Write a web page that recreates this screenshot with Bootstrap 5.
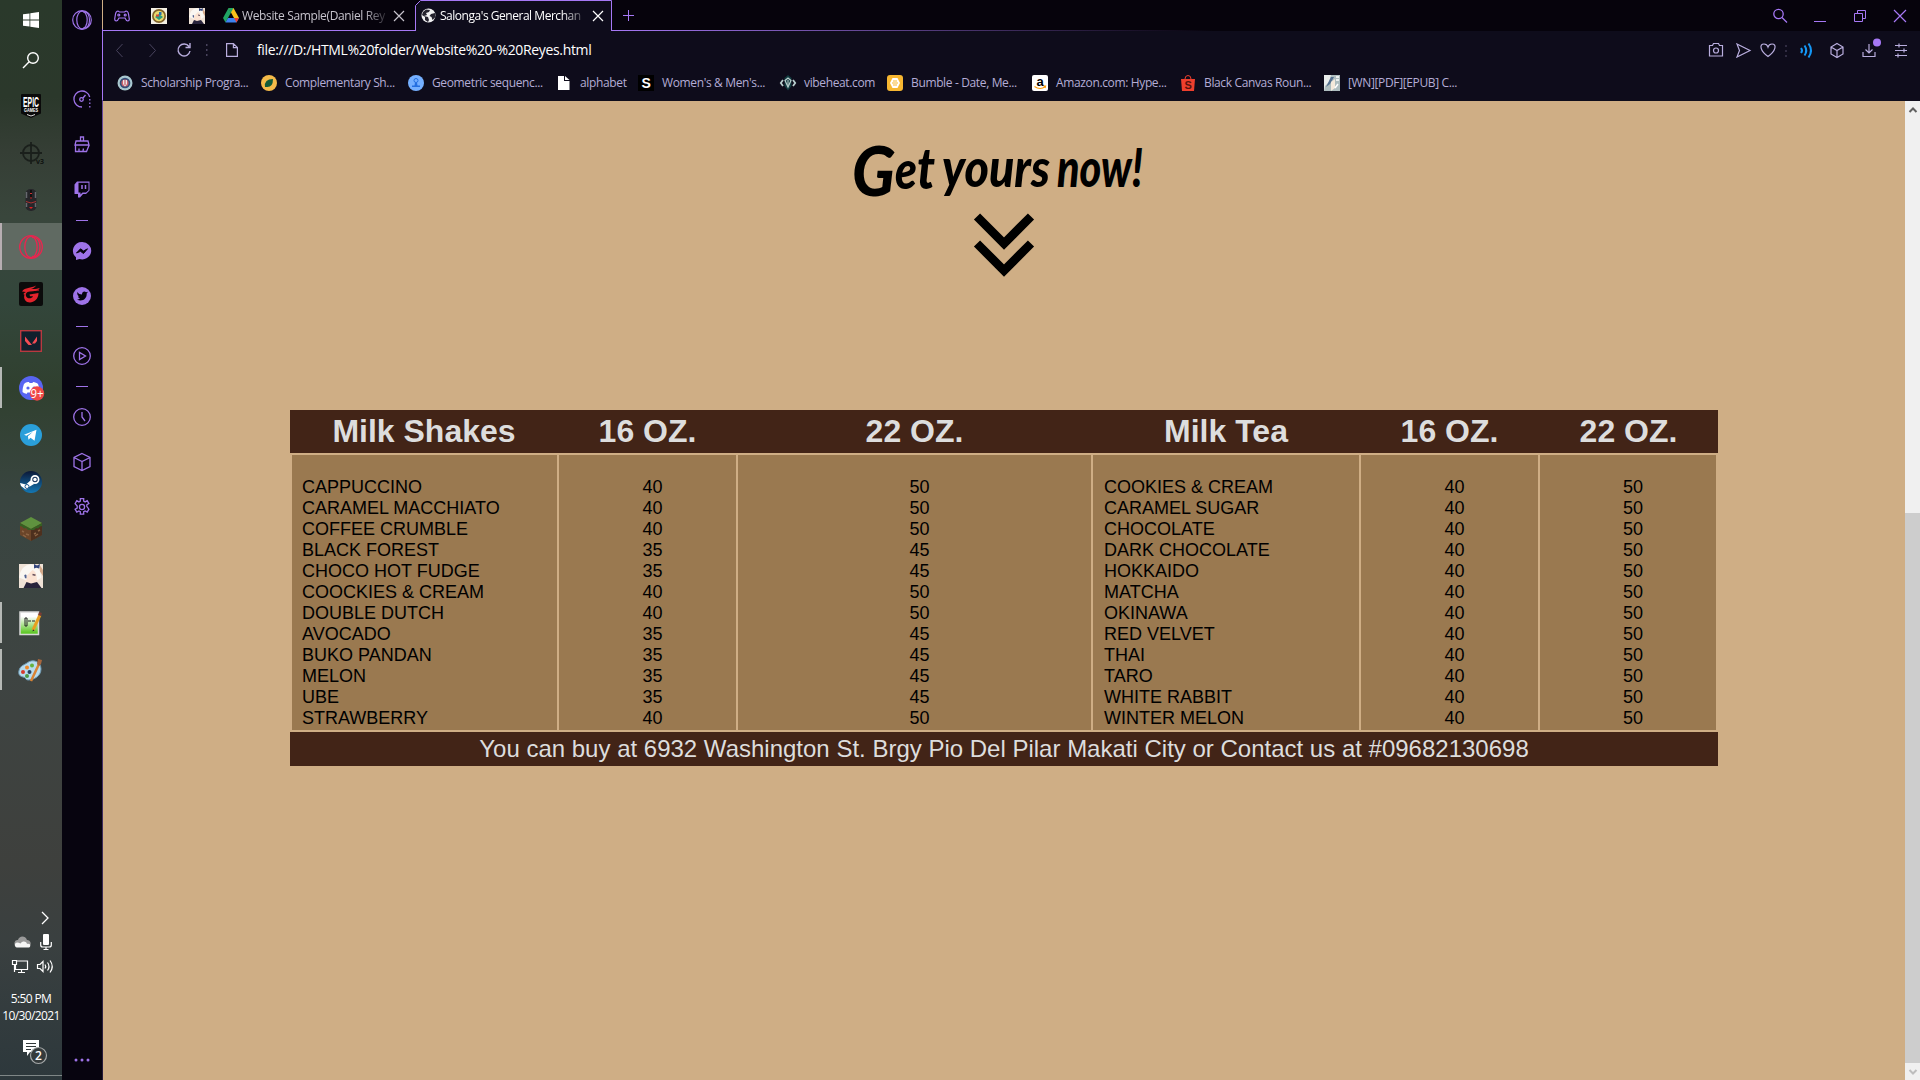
<!DOCTYPE html>
<html lang="en">
<head>
<meta charset="utf-8">
<title>Salonga's General Merchandise</title>
<link href="https://cdn.jsdelivr.net/npm/bootstrap@5.3.0/dist/css/bootstrap.min.css" rel="stylesheet">
<style>
body{width:1920px;height:1080px;background:#cfae85;font-family:"Open Sans","Noto Sans",sans-serif;font-size:12px;line-height:16px}
svg{display:block;flex:none;overflow:visible}
.ln{fill:none;stroke:currentColor}
/* desktop taskbar */
.taskbar{width:62px;background:linear-gradient(#2a392b 0,#2b382b 9%,#353e35 14%,#39463c 20%,#33463b 28%,#30402f 36%,#394540 46%,#3e4442 62%,#3e403d 80%,#3a4040 87%,#2d383c 100%);color:#fff}
.tb-sys{height:40px}
.tb-gap{height:2px}
.tb-app{height:47px;border-left:2px solid transparent;padding-right:2px}
.tb-app.open{border-image:linear-gradient(transparent 4px,#b5b8b5 4px,#b5b8b5 43px,transparent 43px) 1}
.tb-app.current{background:#606a62;border-color:#b7aeb2}
.tray-row{height:24px;gap:9px;padding-left:3px}
.tray-top{padding-left:28px}
.tray-clock{font-size:12px;line-height:17px;letter-spacing:-.62px;height:34px;margin-top:12px}
.notify{height:44px;margin-top:7px}
.tb-edge{height:5px;border-top:1px solid #7f8787}
/* browser sidebar */
.sidebar{width:40px;background:#07040f;color:#9e73e8}
.sidebar>div{display:flex;align-items:center;justify-content:center;flex:none}
.s-logo{height:40px}.s-first{height:78px;padding-top:40px}.s45{height:45px}.s46{height:46px}.s44{height:44px}
.s-twitch{height:49px}
.s-dash{height:16px}
.s-dash:before{content:"";width:12px;height:1px;background:#9e73e8}
/* window chrome */
.browser{width:1818px;border-left:1px solid #4a3470;border-image:linear-gradient(transparent 30px,#a678f5 30px,#a678f5 101px,#694a9d 101px,#5b4189 50%,#251937 100%) 1}
.tabstrip{height:31px;padding-left:1px;background:linear-gradient(90deg,#a678f5 0,#a678f5 510px,transparent 1110px) bottom/100% 1px no-repeat,#06030c;color:#a678f5}
.t-ico{width:36px}.t-ico2{width:38px}.t-plus{width:32px}
.tab-idle{width:199px;padding-left:7px;gap:3px;color:#c6c3cc}
.tab-on{width:197px;padding-left:6px;gap:4px;color:#fff;position:relative}
.tab-on .tab-shape{position:absolute;left:0;top:0}
.tab-on>*{position:relative}
.tab-title{width:145px;white-space:nowrap;letter-spacing:-.36px;-webkit-mask-image:linear-gradient(90deg,#000 84%,rgba(0,0,0,.15))}
.tab-on .tab-title{letter-spacing:-.47px}
.win-ctl{width:160px}
.win-ctl span{display:flex;justify-content:center;align-items:center;width:40px}
.addr{height:38px;background:#0e0c1b;color:#b9aede}
.nav-ico{width:33px;display:flex;justify-content:center}
.nav-load{width:30px}.nav-dots{width:16px;margin-right:11px}
.url{color:#fff;font-size:14px;letter-spacing:-.34px;margin-left:19px}
.tools{padding-right:1px}
.marks{height:32px;background:#0e0c1b;color:#b4add6;padding:0 0 4px 14px;display:grid;grid-template-columns:144px 147px 148px 82px 142px 107px 145px 148px 144px 145px;letter-spacing:-.36px}
.marks a{display:flex;align-items:center;gap:8px;color:inherit;text-decoration:none;white-space:nowrap}
/* page */
.page{background:#cfae85;color:#000}
.cta{height:309px;padding-top:38px}
.cta text{font-family:Lato,sans-serif;font-weight:900;font-style:italic;font-size:53px}
.cta .cap{font-size:68px}
.cta .tall{font-size:58px}
.menu{width:1428px;table-layout:fixed;border-collapse:separate;border-spacing:0;font-family:"Liberation Sans",Arial,sans-serif}
.menu th,.menu tfoot td{background:#422417;color:#ddd;text-align:center;padding:0 0 1px}
.menu th{font-size:32px;line-height:42px}
.menu tfoot td{font-size:24px;line-height:33px}
.menu tbody td{background:#9a7950;border:solid #cfae85;border-width:2px 1px;padding:22px 0 1px 10px;font-size:18px;line-height:21px;text-align:center}
.menu tbody td:first-child{border-left-width:2px}.menu tbody td:last-child{border-right-width:2px}
.menu tbody td.names{text-align:left}
.menu tbody td.names+td+td+td.names{padding-left:11px}
.c-name{width:268px}.c-small{width:179px}.c-wide{width:355px}
.scroller{width:15px;background:#f0f0f0}
.sc-btn{height:17px;display:flex;justify-content:center;align-items:center}
.sc-track{height:395px}.sc-thumb{background:#cdcdcd;flex:1}
</style>
<script src="https://cdn.jsdelivr.net/npm/bootstrap@5.3.0/dist/js/bootstrap.bundle.min.js"></script>
</head>
<body class="d-flex overflow-hidden m-0">

<aside class="taskbar d-flex flex-column flex-shrink-0">
 <div class="tb-sys d-flex align-items-center justify-content-center"><svg width="16" height="16" fill="#fff"><path d="M0 2.3 6.5 1.4V7.6H0zM7.3 1.3 16 0v7.6H7.3zM0 8.4h6.5v6.2L0 13.7zM7.3 8.4H16V16l-8.7-1.3z"/></svg></div>
 <div class="tb-sys d-flex align-items-center justify-content-center"><svg width="16" height="16" class="ln" stroke-width="1.4"><circle cx="10" cy="6" r="5.3"/><path d="M6.2 9.8 0 16"/></svg></div>
 <div class="tb-gap"></div>
 <div class="tb-app d-flex align-items-center justify-content-center"><svg width="20" height="24"><path d="M1 0h18q1 0 1 1v18.500L10 24 0 19.500V1q0-1 1-1z" fill="#0a0a0a"/><text x="2" y="13" fill="#fff" font-family="Liberation Sans" font-weight="700" font-size="14" textLength="16" lengthAdjust="spacingAndGlyphs">EPIC</text><text x="3" y="18" fill="#fff" font-family="Liberation Sans" font-weight="700" font-size="4.500" textLength="14" lengthAdjust="spacingAndGlyphs">GAMES</text><path d="M6 20.500 10 22l4-1.500" fill="none" stroke="#ddd"/></svg></div>
 <div class="tb-app d-flex align-items-center justify-content-center"><svg width="22" height="22" fill="none" stroke="#1a1f1b" stroke-width="1.800"><circle cx="11" cy="11" r="8"/><path d="M11 0v22M0 11h22"/><text x="16" y="22" fill="#101411" stroke="none" font-size="7" font-weight="700">v3</text></svg></div>
 <div class="tb-app d-flex align-items-center justify-content-center"><svg width="12" height="24"><rect x=".5" y="1" width="11" height="22" rx="5" fill="#26262a"/><path d="M1.500 4v6M10.500 4v6M1.500 15v4M10.500 15v4" stroke="#66686e" stroke-width="1.500"/><path d="M6 2v9" stroke="#111" stroke-width="2"/><path d="M5 5.500h2M5 10h2" stroke="#c33"/><path d="M1 13.500 6 15l5-1.500" fill="none" stroke="#a33"/><path d="m4 19 2 2 2-2z" fill="#d22"/></svg></div>
 <div class="tb-app current d-flex align-items-center justify-content-center"><svg width="24" height="24" fill="none" stroke="#e8264f" stroke-width="1.300"><circle cx="12" cy="12" r="11.300"/><ellipse cx="12" cy="12" rx="6.200" ry="10.700"/><path d="M13 2.500c6-1 8 4 8 9.500s-2 10.500-8 9.500"/></svg></div>
 <div class="tb-app d-flex align-items-center justify-content-center"><svg width="24" height="24"><rect width="24" height="24" rx="2" fill="#0b0b0b"/><path d="M3 9.500C6 5 12 6.500 17 3.500c-1 2-3 3-5 3.500 4 .3 7-.5 9-1-2 2.500-6 3.500-10 3.500-4 .2-5 3-3.500 5.500 1.500 2 5.500 1.500 6.500-.8h-3l-.5-1.700 9-1.500C19.500 17 15 20.500 11 20.500S4 17 5.500 12.500C4 12.500 4 11.500 7 10z" fill="#e3232c"/><path d="M13 8.500 20 8" stroke="#e3232c"/></svg></div>
 <div class="tb-app d-flex align-items-center justify-content-center"><svg width="22" height="22"><rect x=".7" y=".7" width="20.600" height="20.600" fill="#10202d" stroke="#b9393f" stroke-width="1.400"/><path d="M5 6.500 12 15H8.500L5 11zM17 6.500V11l-2 2.500h-3z" fill="#f44b54"/></svg></div>
 <div class="tb-app open d-flex align-items-center justify-content-center"><svg width="24" height="24"><circle cx="12" cy="12" r="12" fill="#5865f2"/><path d="M5 8c2-2 4-2 5-2l.5 1h3l.5-1c2 0 4 1 5 2 1 3 2 6 1.500 8-1.500 1.500-3 2-4 2l-1-1.500H8.500L7.500 18c-1.500-.5-2.500-1-4-2C3.500 13 4 10.500 5 8z" fill="#fff"/><circle cx="9" cy="12" r="1.600" fill="#5865f2"/><circle cx="15" cy="12" r="1.600" fill="#5865f2"/><circle cx="18" cy="17.500" r="7.200" fill="#f04848"/><text x="18" y="22" text-anchor="middle" fill="#fff" font-size="12" textLength="13" lengthAdjust="spacingAndGlyphs">9+</text></svg></div>
 <div class="tb-app d-flex align-items-center justify-content-center"><svg width="22" height="22"><circle cx="11" cy="11" r="11" fill="#2a9fda"/><path d="m4 10.700 12.500-5-2 11-4-3-2 2-.6-3.500 5-4.500-6.500 4z" fill="#fff"/></svg></div>
 <div class="tb-app d-flex align-items-center justify-content-center"><svg width="22" height="22"><defs><linearGradient id="st" x2="0" y2="1"><stop stop-color="#0b1736"/><stop offset="1" stop-color="#1478b5"/></linearGradient></defs><circle cx="11" cy="11" r="11" fill="url(#st)"/><path d="m0 12 6 1.500 5-4.500 3 4-5 3q-1 3-4 2L1 15z" fill="#fff"/><circle cx="15" cy="8.500" r="3.600" fill="#16335c" stroke="#fff" stroke-width="1.700"/><circle cx="15" cy="8.500" r="1.700" fill="#fff"/><circle cx="7" cy="15.500" r="2" fill="none" stroke="#1b568b"/></svg></div>
 <div class="tb-app d-flex align-items-center justify-content-center"><svg width="22" height="24"><path d="m11 1 11 5v12l-11 6L0 18V6z" fill="#6b4529"/><path d="m11 12 11-5v11l-11 6z" fill="#4d301e"/><path d="m11 0 11 6-11 6L0 6z" fill="#5f923f"/><path d="M0 6v3l2 .500 2 2 2-.5 2 2h3V12zM22 6v3l-2 .500-2 2-2-.5-2 2h-3V12z" fill="#356022"/><path d="m2 14 2 1m2 2 3 1m-6 0 3 2m8-3 2-1m2-2 2-1m-5 6 3-2" stroke="#8c6545" stroke-width="1.500"/></svg></div>
 <div class="tb-app d-flex align-items-center justify-content-center"><svg width="24" height="24"><use href="#girl" transform="scale(1.500)"/></svg></div>
 <div class="tb-app open d-flex align-items-center justify-content-center"><svg width="22" height="24"><defs><linearGradient id="np" x2="0" y2="1"><stop offset=".2" stop-color="#fff"/><stop offset=".9" stop-color="#62c92c"/></linearGradient></defs><rect x="0" y="1" width="18.500" height="22.500" fill="url(#np)" stroke="#d8d8d8" stroke-width="1.500"/><path d="M5 7v8M7 7v8M5 7h2m-2 8h2m1-5h3m1 0h3" stroke="#222" fill="none"/><path d="m13 19 7-15" stroke="#e8a020" stroke-width="3"/><path d="m12.500 20.500.5-2 1.500.7z" fill="#222"/><path d="m19.500 4.500 1-3" stroke="#7b3d34" stroke-width="3"/></svg></div>
 <div class="tb-app open d-flex align-items-center justify-content-center"><svg width="24" height="24"><path d="M8 5c6-5 14-1 14 6s-7 11-13 11c-3 0-2-3-5-3-5-1-5-5-3-9 2-3 4-3 7-5z" fill="#b7dcef" stroke="#6f9bb5"/><circle cx="4" cy="14" r="2" fill="#d83a2e"/><circle cx="8" cy="9.500" r="2" fill="#f08a2c"/><circle cx="13" cy="7.500" r="2" fill="#65b13d"/><circle cx="8" cy="18" r="2" fill="#4b9b46"/><circle cx="10.500" cy="14" r="2" fill="#29405e"/><path d="m12 23 8-17" stroke="#d98334" stroke-width="2.500"/><path d="m18 6 1-5 4 1-1 4-2 2z" fill="#a8663d"/></svg></div>
 <div class="mt-auto">
  <div class="tray-row tray-top d-flex align-items-center justify-content-center"><svg width="8" height="12" class="ln" stroke-width="1.300"><path d="m1 0 6 6-6 6"/></svg></div>
  <div class="tray-row d-flex align-items-center justify-content-center"><svg width="17" height="12"><path d="M3 10a3 3 0 0 1 1-6C5 0 11-1 13 4c4 0 5 5 2 6z" fill="#999"/><path d="M3 11.500C0 11 0 6.500 3.500 6.500c2 0 2 1 3 1C9 4 13 6 13 8c4-1 4 3 2 3.500z" fill="#f5f5f5"/></svg><svg width="12" height="16" fill="#fff"><rect x="3" y="0" width="6" height="11" rx="1"/><path d="M.7 8v3q0 2 2 2h6.600q2 0 2-2V8M6 13v2.500M3.500 15.500h5" class="ln" stroke-width="1.200"/></svg></div>
  <div class="tray-row d-flex align-items-center justify-content-center"><svg width="16" height="13" class="ln" stroke-width="1.200"><path d="M5 1h10.500v8.500H3.500V5M.5.5h4v4h-4zM2.500 5v7M9.500 9.500v3M6 12.500h7"/></svg><svg width="16" height="13" class="ln" stroke-width="1.200"><path d="M.5 4.500H3L6 1.500v10L3 8.500H.5zM8 4.500q1.500 2 0 4M10.500 2.500q3 4 0 8M13 .500q4.500 6 0 12"/></svg></div>
  <div class="tray-clock text-center text-nowrap">5:50 PM<br>10/30/2021</div>
  <div class="notify d-flex align-items-center justify-content-center pb-1"><svg width="24" height="24"><path d="M4 1h16v12h-9l-3 4v-4H4z" fill="#fff"/><path d="M7 4.500h10M7 7.500h10M7 10.500h5" stroke="#333a3b"/><circle cx="19.500" cy="16.500" r="8" fill="#353b3c" stroke="#a5a9a9" stroke-width="1.200"/><text x="19.500" y="21" text-anchor="middle" fill="#fff" font-size="12" font-weight="600">2</text></svg></div>
  <div class="tb-edge"></div>
 </div>
</aside>

<nav class="sidebar d-flex flex-column flex-shrink-0">
 <div class="s-logo"><svg width="20" height="20" class="ln" stroke-width="1.200"><circle cx="10" cy="10" r="9.300"/><ellipse cx="10" cy="10" rx="5.200" ry="8.900"/><path d="M11 2c5-.7 6.500 3.500 6.500 8S16 18.700 11 18"/></svg></div>
 <div class="s-first"><svg width="18" height="18" class="ln" stroke-width="1.300"><path d="M9 17A8 8 0 1 1 16.700 7"/><path d="M16.800 9v1.500m0 2V14m0 2v1.500"/><circle cx="8.500" cy="9.500" r="1.800"/><path d="m10 8 2.500-3"/></svg></div>
 <div class="s45 pt-2"><svg width="16" height="17" class="ln" stroke-width="1.300"><path d="M6.500 5V1h3v4M2 5h12l1 4H1zM1.500 9.500v6h11l2.500-6M5 15v-2.500M9 15l.5-2.500"/></svg></div>
 <div class="s-twitch pt-1"><svg width="16" height="17"><path d="M3 .5h12.500v9L12 13H9l-3 3.500H4V13H.5V3.500z" fill="currentColor"/><path d="M4.500 1.800h10v7.400L12 11.500H8.500L6.500 13.500v-2h-2z" fill="#07040f"/><path d="M8 4v4M11.500 4v4" stroke="currentColor" stroke-width="1.500"/></svg></div>
 <div class="s-dash"></div>
 <div class="s46"><svg width="18" height="18"><path d="M9 0a9 8.700 0 1 1-2.500 17L3 18v-2.800A9 8.700 0 0 1 9 0z" fill="currentColor"/><path d="m3.500 11 4-4.200 3 2.200 4-2.200-4 4.700-3-2.200z" fill="#07040f" stroke="#07040f"/></svg></div>
 <div class="s44"><svg width="18" height="18"><circle cx="9" cy="9" r="9" fill="currentColor"/><path d="M4 5q2 2.500 5 2.500C9 4 12 4 13 5.200l2-.5-1.300 1.700C14 12 9 15 4 12.500q2 0 3-1-2-.5-2-2h1Q4 8 4 5z" fill="#07040f"/></svg></div>
 <div class="s-dash"></div>
 <div class="s44"><svg width="18" height="18" class="ln" stroke-width="1.300"><circle cx="9" cy="9" r="8.300"/><path d="M6.500 5.500v7l6-3.500z"/></svg></div>
 <div class="s-dash"></div>
 <div class="s45"><svg width="18" height="18" class="ln" stroke-width="1.300"><circle cx="9" cy="9" r="8.300"/><path d="M9 4v5l3 4"/></svg></div>
 <div class="s45"><svg width="18" height="18" class="ln" stroke-width="1.300"><path d="m9 .5 8 4v9l-8 4-8-4v-9zM1 4.500l8 4 8-4M9 8.500v9"/></svg></div>
 <div class="s45"><svg width="18" height="18" viewBox="0 0 18 18" class="ln" stroke-width="1.300"><circle cx="9" cy="9" r="2.600"/><path d="M7.300.7h3.400v2.400l1.400.8 2.100-1.200 1.700 2.900-2.100 1.200v1.600h0l2.100 2.800-1.700 2.900-2.100-1.200-1.400.8v2.400H7.300v-2.400l-1.400-.8-2.100 1.200-1.700-2.900 2.100-1.200V8L2.100 5.600l1.700-2.900 2.100 1.200 1.400-.8z"/></svg></div>
 <div class="mt-auto s-logo"><svg width="16" height="4" fill="currentColor"><circle cx="2" cy="2" r="1.500"/><circle cx="8" cy="2" r="1.500"/><circle cx="14" cy="2" r="1.500"/></svg></div>
</nav>

<div class="browser d-flex flex-column flex-shrink-0">
 <header>
  <div class="tabstrip d-flex align-items-stretch">
   <div class="t-ico d-flex align-items-center justify-content-center"><svg width="16" height="12" class="ln" stroke-width="1.200"><path d="M4 1Q2 1 1.500 4L.7 9q0 2 1.500 2T5 8h6q1.300 3 2.800 3t1.500-2l-.8-5Q14 1 12 1l-1.500 1h-5z"/><circle cx="4.800" cy="5" r="1"/><circle cx="11.200" cy="5" r="1"/></svg></div>
   <div class="t-ico2 d-flex align-items-center justify-content-center"><svg width="16" height="16"><rect width="16" height="16" fill="#f4f0e4"/><circle cx="8" cy="8" r="7" fill="#80622b"/><circle cx="8" cy="8" r="5.300" fill="#e8d96f"/><path d="m4 9 4-3 4 3-4 3z" fill="#2b9c80"/><path d="M5 6.500h3v2H5z" fill="#d94737"/><path d="M8 4h2.500v3H8z" fill="#2870b4"/></svg></div>
   <div class="t-ico2 d-flex align-items-center justify-content-center"><svg width="16" height="16"><g id="girl"><rect width="16" height="16" fill="#efe2d6"/><path d="M3 7q5-6 10 0v4q-5 5-9 1z" fill="#fbe3d3"/><path d="M0 9Q1 1 8 0q6 1 7 9l-3 2Q12 5 9 4L5 8v3z" fill="#faf7f2"/><path d="M3.500 7.500q1-1 1.500 0v2H4z" fill="#50608f"/><path d="m9 7 2 .5" stroke="#66505c"/><path d="m10 0 2 1 2-1-.5 3-2-.5L10 3z" fill="#34477e"/><path d="m3 16 2-4 3 1 4-1 3 4z" fill="#29243b"/><path d="m14 1 2 3v4l-2-3z" fill="#d3a889"/></g></svg></div>
   <div class="tab-idle d-flex align-items-center"><svg width="16" height="15"><path d="M5.500 0h5L16 10h-5z" fill="#fbc11a"/><path d="M5.500 0 8 4.500 2.500 14.500 0 10z" fill="#20a464"/><path d="M2.500 14.500 5 10h11l-2.500 4.500z" fill="#3d82f0"/><path d="m5.500 0 5 0L8 4.500z" fill="#20a464"/><path d="m13.500 14.500-2.500-4.500h5z" fill="#e94335"/></svg><span class="tab-title">Website Sample(Daniel Rey</span><svg width="10" height="10" class="ln ms-1" stroke-width="1.200"><path d="m0 0 10 10M10 0 0 10"/></svg></div>
   <div class="tab-on d-flex align-items-center"><svg class="tab-shape" width="197" height="31"><path d="M.5 31V5.500l5-5h191V31z" fill="#0e0c1b"/><path d="M.5 31V5.500l5-5h191V31" fill="none" stroke="#a678f5"/></svg><svg width="15" height="15"><circle cx="7.500" cy="7.500" r="7" fill="#f0f0f2"/><path d="M2 4 5 1.500 9 2l-1 2-3 1 1 2-3 1 4 1 1 3-1 2-3-2V9L1 7zM10 6l4-1 .5 4-3 3-1-3-2-1z" fill="#24222e"/></svg><span class="tab-title">Salonga's General Merchan</span><svg width="10" height="10" class="ln ms-1" stroke-width="1.200"><path d="m0 0 10 10M10 0 0 10"/></svg></div>
   <div class="t-plus d-flex align-items-center justify-content-center"><svg width="11" height="11" class="ln"><path d="M5.500 0v11M0 5.500h11"/></svg></div>
   <div class="win-ctl d-flex ms-auto">
    <span><svg width="14" height="14" class="ln" stroke-width="1.300"><circle cx="5.500" cy="5" r="4.700"/><path d="m9 8.500 5 5"/></svg></span>
    <span><svg width="12" height="12" class="ln"><path d="M0 11.500h12"/></svg></span>
    <span><svg width="12" height="12" class="ln"><path d="M.5 3.500h8v8h-8zM3.500 3.500v-3h8v8h-3"/></svg></span>
    <span><svg width="12" height="12" class="ln" stroke-width="1.200"><path d="m0 0 12 12M12 0 0 12"/></svg></span>
   </div>
  </div>
  <div class="addr d-flex align-items-center">
   <span class="nav-ico"><svg width="7" height="13" class="ln"><path d="M6.500 0 .5 6.500l6 6.500" stroke="#48435d"/></svg></span>
   <span class="nav-ico"><svg width="7" height="13" class="ln"><path d="m.5 0 6 6.500-6 6.500" stroke="#48435d"/></svg></span>
   <span class="nav-ico nav-load"><svg width="14" height="14" class="ln" stroke-width="1.400"><path d="M12 3.500A6 6 0 1 0 13 8M13 0v4.500H8.500"/></svg></span>
   <span class="nav-ico nav-dots"><svg width="2" height="12" fill="#48435d"><path d="M0 0h1.500v2H0zM0 5h1.500v2H0zM0 10h1.500v2H0z"/></svg></span><svg width="12" height="14"><path d="M.6.6h6.800l4 4v8.800H.6zM7.400.6v4h4" class="ln" stroke-width="1.200"/></svg>
   <span class="url">file:///D:/HTML%20folder/Website%20-%20Reyes.html</span>
   <div class="tools d-flex align-items-center ms-auto">
    <svg width="218" height="24" class="ln" stroke-width="1.200"><path d="M8.500 7.500h3l1-2h5l1 2h3v10.500h-13z"/><circle cx="15" cy="12.500" r="2.500"/><path d="m36 6 13 6.500L36 19l2.500-6.500zM67 18.500C59 13 58 6 63 6q3 0 4 3 1-3 4-3c5 0 4 7-4 12.500z"/><path d="M85 7v2m0 3v2m0 3v2" stroke="#48435d"/><g stroke="#1497f5" stroke-width="2"><path d="M100 10q2 2.500 0 5M103.500 7.500q3.500 5 0 10M107.500 5.500q5 7 0 14"/></g><path d="m136 5.500 6 3.500v7l-6 3.500-6-3.500V9zM130 9l6 3.500L142 9M136 12.500v7M162 14v4.500h12V14M168 6v9M164.500 11.500l3.500 3.500 3.500-3.500M194 7.500h12M194 12.500h12M194 17.500h12M198 5.500v4M203 10.500v4M197 15.500v4"/><circle cx="176" cy="4.500" r="4" fill="#a678f5" stroke="none"/></svg>
   </div>
  </div>
  <div class="marks">
   <a><svg width="16" height="16"><circle cx="8" cy="8" r="7.500" fill="#a9c8d0"/><circle cx="8" cy="8" r="5.300" fill="#354d78"/><circle cx="8" cy="8" r="3.600" fill="#c9626c"/><path d="M6 5h4v4l-2 2.500L6 9z" fill="#eee4e5"/><path d="M8 5v5" stroke="#b43f50"/></svg>Scholarship Progra...</a>
   <a><svg width="16" height="16"><circle cx="8" cy="8" r="8" fill="#f5bb49"/><path d="M4 12Q3 4 12 4q0 9-7 8z" fill="#125b38"/></svg>Complementary Sh...</a>
   <a><svg width="16" height="16"><circle cx="8" cy="8" r="8" fill="#75b0ff"/><circle cx="8" cy="5.500" r="2" fill="none" stroke="#246fe0"/><path d="M7 7.500h2l.5 3H12V12H4v-1.500h2.500z" fill="#246fe0"/></svg>Geometric sequenc...</a>
   <a><svg width="16" height="16"><path d="M2 1h6v5h5.500v9H2zM9 1l4.500 4H9z" fill="#fff"/></svg>alphabet</a>
   <a><svg width="16" height="16"><rect width="16" height="16" fill="#000"/><text x="8" y="13" text-anchor="middle" font-size="14" font-family="Liberation Sans" font-weight="700" fill="#fff">S</text></svg>Women's &amp; Men's...</a>
   <a><svg width="16" height="16"><path d="M8 0l3.500 3v8L8 15.500 4.500 11V3z" fill="#123c40"/><path d="M3 5 .8 8 3 11M13 5l2.200 3-2.200 3" fill="none" stroke="#b9cfce" stroke-width="1.800"/><path d="M5 5.500 8 3l3 2.500L8 12z" fill="none" stroke="#b9cfce" stroke-width="1.200"/><path d="M8 5v5" stroke="#b9cfce"/></svg>vibeheat.com</a>
   <a><svg width="16" height="16"><rect width="16" height="16" rx="3" fill="#f7b731"/><path d="M5.500 3h5L13 8l-2.500 5h-5L3 8z" fill="#fff"/><path d="M6 6h4M5 8h6M6 10h4" stroke="#f7b731"/></svg>Bumble - Date, Me...</a>
   <a><svg width="16" height="16"><rect width="16" height="16" rx="2" fill="#fff"/><text x="8" y="10.500" text-anchor="middle" font-size="13" font-family="Liberation Sans" font-weight="700">a</text><path d="M2.500 11.500q5.500 4 11 0m-2-.5h2l-.5 2" fill="none" stroke="#f90" stroke-width="1.200"/></svg>Amazon.com: Hype...</a>
   <a><svg width="16" height="16"><path d="M1 4h14l-1 12H2z" fill="#ee3f2d"/><path d="M5 4q0-3.500 3-3.500T11 4" fill="none" stroke="#ee3f2d"/><text x="8" y="14" text-anchor="middle" font-size="11" font-family="Liberation Sans" font-weight="700" fill="#57120d">S</text></svg>Black Canvas Roun...</a>
   <a><svg width="16" height="16"><rect width="16" height="16" fill="#aebdbf"/><path d="M0 0h7L5 7l-4 4-1 5z" fill="#e9edec"/><path d="m7 2-5 10 4-3 4-7z" fill="#547090"/><path d="m7 7 4-3v9l-4 3z" fill="#f4e9db"/><path d="M12 2h3M12 5h3M11 13l3-4" stroke="#fff" stroke-width="1.500"/></svg>[WN][PDF][EPUB] C...</a>
  </div>
 </header>
 <div class="d-flex flex-grow-1">
  <main class="page flex-grow-1 d-flex flex-column align-items-center">
   <div class="cta">
    <svg width="300" height="140"><text><tspan class="cap" x="-2" y="57" textLength="43" lengthAdjust="spacingAndGlyphs">G</tspan><tspan x="41" y="50" textLength="22" lengthAdjust="spacingAndGlyphs">e</tspan><tspan class="tall" x="63" y="50" textLength="18" lengthAdjust="spacingAndGlyphs">t</tspan></text><text x="88" y="48" textLength="108" lengthAdjust="spacingAndGlyphs">yours</text><text x="203" y="48" textLength="86" lengthAdjust="spacingAndGlyphs">now!</text><path d="m123 77.500 27 27 27-27M123 104.500l27 27 27-27" fill="none" stroke="#000" stroke-width="8.700"/></svg>
   </div>
   <table class="menu">
    <colgroup><col class="c-name"><col class="c-small"><col class="c-wide"><col class="c-name"><col class="c-small"><col class="c-small"></colgroup>
    <thead><tr><th>Milk Shakes</th><th>16 OZ.</th><th>22 OZ.</th><th>Milk Tea</th><th>16 OZ.</th><th>22 OZ.</th></tr></thead>
    <tbody><tr>
     <td class="names">CAPPUCCINO<br>CARAMEL MACCHIATO<br>COFFEE CRUMBLE<br>BLACK FOREST<br>CHOCO HOT FUDGE<br>COOCKIES &amp; CREAM<br>DOUBLE DUTCH<br>AVOCADO<br>BUKO PANDAN<br>MELON<br>UBE<br>STRAWBERRY</td>
     <td>40<br>40<br>40<br>35<br>35<br>40<br>40<br>35<br>35<br>35<br>35<br>40</td>
     <td>50<br>50<br>50<br>45<br>45<br>50<br>50<br>45<br>45<br>45<br>45<br>50</td>
     <td class="names">COOKIES &amp; CREAM<br>CARAMEL SUGAR<br>CHOCOLATE<br>DARK CHOCOLATE<br>HOKKAIDO<br>MATCHA<br>OKINAWA<br>RED VELVET<br>THAI<br>TARO<br>WHITE RABBIT<br>WINTER MELON</td>
     <td>40<br>40<br>40<br>40<br>40<br>40<br>40<br>40<br>40<br>40<br>40<br>40</td>
     <td>50<br>50<br>50<br>50<br>50<br>50<br>50<br>50<br>50<br>50<br>50<br>50</td>
    </tr></tbody>
    <tfoot><tr><td colspan="6">You can buy at 6932 Washington St. Brgy Pio Del Pilar Makati City or Contact us at #09682130698</td></tr></tfoot>
   </table>
  </main>
  <div class="scroller d-flex flex-column">
   <div class="sc-btn"><svg width="8" height="6" fill="none" stroke="#606060" stroke-width="2"><path d="m.5 5 3.500-3.500L7.500 5"/></svg></div>
   <div class="sc-track"></div>
   <div class="sc-thumb"></div>
   <div class="sc-btn"><svg width="8" height="6" fill="none" stroke="#bdbdbd" stroke-width="2"><path d="m.5 1 3.500 3.500L7.500 1"/></svg></div>
  </div>
 </div>
</div>
</body>
</html>
